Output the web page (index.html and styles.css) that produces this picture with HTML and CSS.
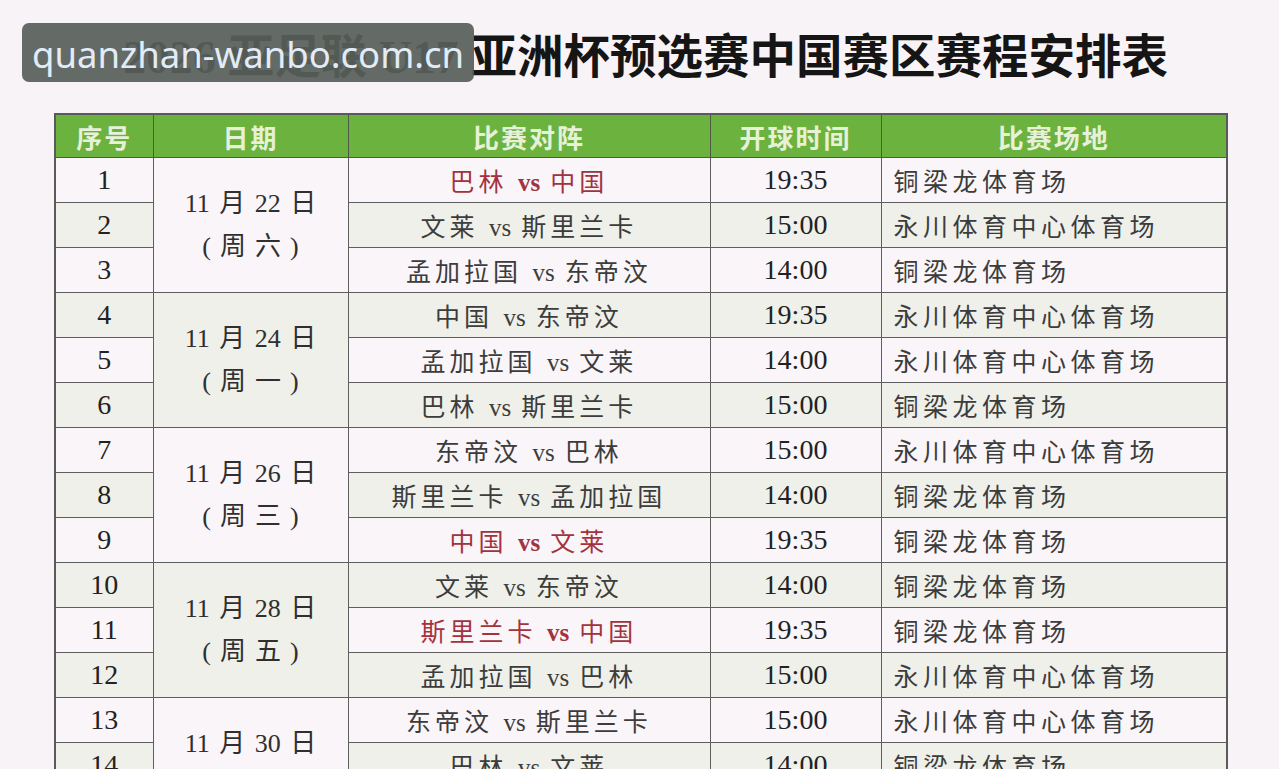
FILE: index.html
```html
<!DOCTYPE html>
<html lang="zh-CN">
<head>
<meta charset="utf-8">
<title>2026 亚足联 U17 亚洲杯预选赛中国赛区赛程安排表</title>
<link rel="stylesheet" href="styles.css">
</head>
<body>
<div class="page">
  <h1 class="title">2026 亚足联 U17 亚洲杯预选赛中国赛区赛程安排表</h1>
  <div class="watermark">quanzhan-wanbo.com.cn</div>
  <table class="schedule">
    <colgroup>
      <col class="c-no"><col class="c-date"><col class="c-match"><col class="c-time"><col class="c-venue">
    </colgroup>
    <thead>
      <tr><th>序号</th><th>日期</th><th>比赛对阵</th><th>开球时间</th><th>比赛场地</th></tr>
    </thead>
    <tbody>
      <tr class="odd"><td class="no">1</td><td class="date g-light" rowspan="3">11 月 22 日<br><span class="wd">(周六)</span></td><td class="match hot">巴林 <b>vs</b> 中国</td><td class="time">19:35</td><td class="venue">铜梁龙体育场</td></tr>
      <tr class="even"><td class="no">2</td><td class="match">文莱 <i>vs</i> 斯里兰卡</td><td class="time">15:00</td><td class="venue">永川体育中心体育场</td></tr>
      <tr class="odd"><td class="no">3</td><td class="match">孟加拉国 <i>vs</i> 东帝汶</td><td class="time">14:00</td><td class="venue">铜梁龙体育场</td></tr>

      <tr class="even"><td class="no">4</td><td class="date g-gray" rowspan="3">11 月 24 日<br><span class="wd">(周一)</span></td><td class="match">中国 <i>vs</i> 东帝汶</td><td class="time">19:35</td><td class="venue">永川体育中心体育场</td></tr>
      <tr class="odd"><td class="no">5</td><td class="match">孟加拉国 <i>vs</i> 文莱</td><td class="time">14:00</td><td class="venue">永川体育中心体育场</td></tr>
      <tr class="even"><td class="no">6</td><td class="match">巴林 <i>vs</i> 斯里兰卡</td><td class="time">15:00</td><td class="venue">铜梁龙体育场</td></tr>

      <tr class="odd"><td class="no">7</td><td class="date g-light" rowspan="3">11 月 26 日<br><span class="wd">(周三)</span></td><td class="match">东帝汶 <i>vs</i> 巴林</td><td class="time">15:00</td><td class="venue">永川体育中心体育场</td></tr>
      <tr class="even"><td class="no">8</td><td class="match">斯里兰卡 <i>vs</i> 孟加拉国</td><td class="time">14:00</td><td class="venue">铜梁龙体育场</td></tr>
      <tr class="odd"><td class="no">9</td><td class="match hot">中国 <b>vs</b> 文莱</td><td class="time">19:35</td><td class="venue">铜梁龙体育场</td></tr>

      <tr class="even"><td class="no">10</td><td class="date g-gray" rowspan="3">11 月 28 日<br><span class="wd">(周五)</span></td><td class="match">文莱 <i>vs</i> 东帝汶</td><td class="time">14:00</td><td class="venue">铜梁龙体育场</td></tr>
      <tr class="odd"><td class="no">11</td><td class="match hot">斯里兰卡 <b>vs</b> 中国</td><td class="time">19:35</td><td class="venue">铜梁龙体育场</td></tr>
      <tr class="even"><td class="no">12</td><td class="match">孟加拉国 <i>vs</i> 巴林</td><td class="time">15:00</td><td class="venue">永川体育中心体育场</td></tr>

      <tr class="odd"><td class="no">13</td><td class="date g-light" rowspan="3">11 月 30 日<br><span class="wd">(周日)</span></td><td class="match">东帝汶 <i>vs</i> 斯里兰卡</td><td class="time">15:00</td><td class="venue">永川体育中心体育场</td></tr>
      <tr class="even"><td class="no">14</td><td class="match">巴林 <i>vs</i> 文莱</td><td class="time">14:00</td><td class="venue">铜梁龙体育场</td></tr>
      <tr class="odd"><td class="no">15</td><td class="match hot">中国 <b>vs</b> 孟加拉国</td><td class="time">19:35</td><td class="venue">铜梁龙体育场</td></tr>
    </tbody>
  </table>
</div>
</body>
</html>
```

FILE: styles.css
```css
html, body {
  margin: 0;
  padding: 0;
  background: #f8f3f6;
}
body {
  font-family: "Liberation Serif", "Noto Sans CJK SC", serif;
  color: #2a2a2a;
}
.page {
  position: relative;
  padding-top: 28px;
}
.title {
  margin: 0 0 25px 0;
  height: 60px;
  line-height: 60px;
  text-align: center;
  font-family: "Liberation Serif", "Noto Sans CJK SC", serif;
  font-weight: 700;
  font-size: 46.5px;
  color: #151515;
  padding-left: 12px;
}
.watermark {
  position: absolute;
  left: 22px;
  top: 23px;
  width: 452px;
  height: 59px;
  box-sizing: border-box;
  padding-left: 10px;
  padding-top: 3px;
  border-radius: 7px;
  background: rgba(88, 96, 90, 0.93);
  color: #e2ecf8;
  font-family: "Noto Sans", "Open Sans", sans-serif;
  font-size: 36.5px;
  line-height: 56px;
  white-space: nowrap;
  overflow: hidden;
}
.schedule {
  margin-left: 54px;
  width: 1172px;
  border-collapse: collapse;
  table-layout: fixed;
  border: 2px solid #5a5a5a;
}
.c-no { width: 98px; }
.c-date { width: 195px; }
.c-match { width: 362px; }
.c-time { width: 171px; }
.c-venue { width: 346px; }

.schedule th {
  height: 42px;
  padding: 0;
  background: #6cb23f;
  color: #e6f1d8;
  font-family: "Noto Sans CJK SC", sans-serif;
  font-weight: 700;
  font-size: 26px;
  letter-spacing: 2px;
  border: 1.5px solid #4e5a46;
  text-align: center;
  vertical-align: middle;
}
.schedule td {
  height: 44px;
  padding: 0;
  border: 1.5px solid #5e5e5e;
  text-align: center;
  vertical-align: middle;
  white-space: nowrap;
}
.schedule tr.odd td { background: #faf5f8; }
.schedule tr.even td { background: #eef0e9; }
.schedule td.g-light { background: #faf5f8; }
.schedule td.g-gray { background: #eef0e9; }

.no {
  font-size: 28px;
  color: #222;
}
.date {
  font-size: 26px;
  line-height: 43px;
  color: #2f2f2f;
  word-spacing: 3px;
}
.date .wd {
  letter-spacing: 9px;
  padding-left: 9px;
}
.match {
  font-size: 25px;
  letter-spacing: 4px;
  color: #3c3c3c;
}
.match i {
  font-style: normal;
  letter-spacing: 0;
}
.match.hot {
  color: #a3323f;
}
.match b {
  font-weight: 700;
  letter-spacing: 0;
}
.time {
  font-size: 28px;
  color: #222;
}
.schedule td.venue {
  text-align: left;
  padding-left: 12px;
  font-size: 25px;
  letter-spacing: 4.5px;
  color: #3c3c3c;
}
```
